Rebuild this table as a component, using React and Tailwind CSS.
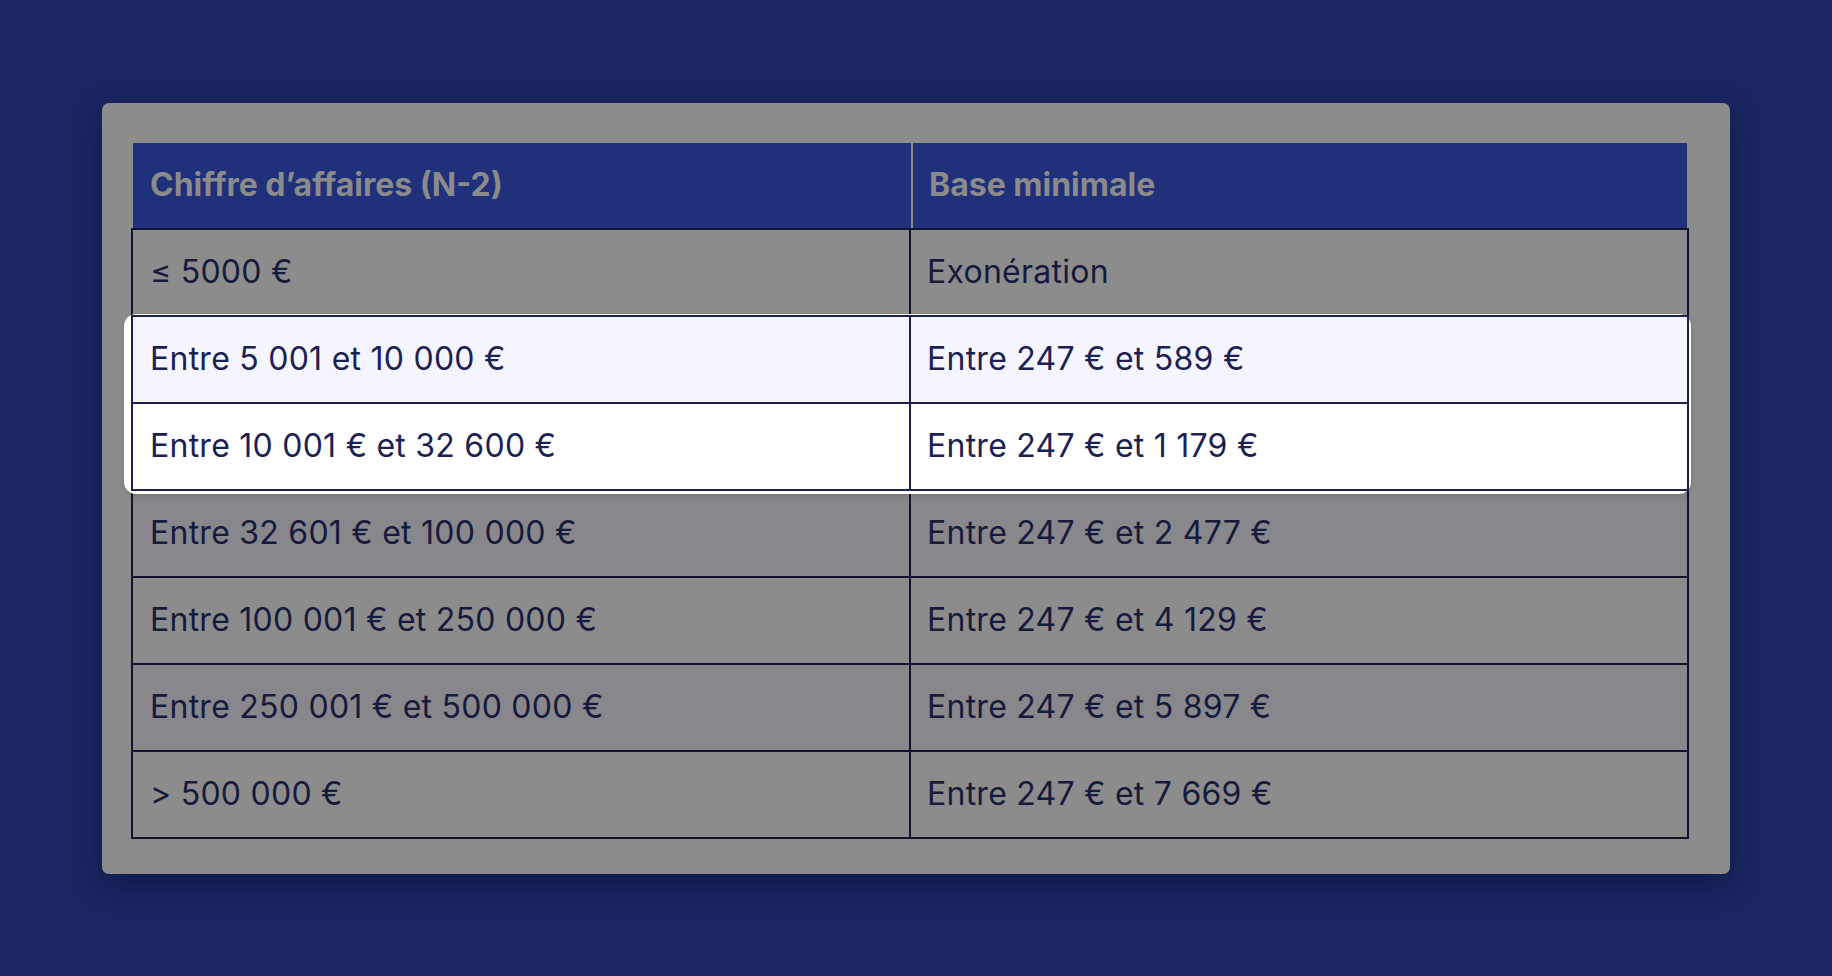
const rows = [
  ['≤ 5000 €', 'Exonération'],
  ['Entre 5 001 et 10 000 €', 'Entre 247 € et 589 €'],
  ['Entre 10 001 € et 32 600 €', 'Entre 247 € et 1 179 €'],
  ['Entre 32 601 € et 100 000 €', 'Entre 247 € et 2 477 €'],
  ['Entre 100 001 € et 250 000 €', 'Entre 247 € et 4 129 €'],
  ['Entre 250 001 € et 500 000 €', 'Entre 247 € et 5 897 €'],
  ['> 500 000 €', 'Entre 247 € et 7 669 €'],
];

function DimRow({ cells, first, striped }) {
  return (
    <div
      className={`flex border-x-2 border-b-2 border-[#12142f] text-[#161a3b] ${first ? 'border-t-2 h-[89px]' : 'h-[87px]'} ${striped ? 'bg-[#88878c]' : 'bg-[#8c8c8c]'}`}
    >
      <div className="w-[778px] shrink-0 flex items-center px-[17px] border-r-2 border-[#12142f]">{cells[0]}</div>
      <div className="flex-1 flex items-center px-[16px]">{cells[1]}</div>
    </div>
  );
}

function LitRow({ cells, first, bg }) {
  return (
    <div
      className={`flex border-x-2 border-b-2 border-[#1c2152] text-[#1b2152] ${first ? 'border-t-2 h-[89px]' : 'h-[87px]'} ${bg}`}
    >
      <div className="w-[778px] shrink-0 flex items-center px-[17px] border-r-2 border-[#1c2152]">{cells[0]}</div>
      <div className="flex-1 flex items-center px-[16px]">{cells[1]}</div>
    </div>
  );
}

export default function App() {
  return (
    <div className="min-h-screen w-full bg-[#1b2662] flex items-center justify-center" style={{ fontFamily: 'Inter, "Noto Sans", sans-serif' }}>
      <div className="w-[1628px] h-[771px] bg-[#8c8c8c] rounded-[7px] shadow-[0_10px_30px_rgba(5,10,40,0.45)] pl-[29px] pr-[41px] pt-[40px]">
        <div className="w-[1558px] text-[32px] leading-none">
          {/* Header */}
          <div className="mx-[2px] h-[85px] grid grid-cols-[778px_774px] gap-[2px] font-bold text-[#8b8b8b]">
            <div className="bg-[#21307a] flex items-center px-[17px]">Chiffre d’affaires (N-2)</div>
            <div className="bg-[#21307a] flex items-center px-[16px]">Base minimale</div>
          </div>

          <div className="tracking-[0.25px]">
            <DimRow cells={rows[0]} first />

            {/* Highlighted rows */}
            <div className="relative z-10 bg-white rounded-[12px] shadow-[0_2px_6px_rgba(0,0,0,0.15)] -ml-[7px] pl-[7px] -mr-[2px] pr-[2px] -mt-[3px] pt-[1px] -mb-[3px] pb-[3px]">
              <LitRow cells={rows[1]} first bg="bg-[#f4f5fe]" />
              <LitRow cells={rows[2]} bg="bg-white" />
            </div>

            {rows.slice(3).map((r, i) => (
              <DimRow key={i} cells={r} striped={i % 2 === 0} />
            ))}
          </div>
        </div>
      </div>
    </div>
  );
}
